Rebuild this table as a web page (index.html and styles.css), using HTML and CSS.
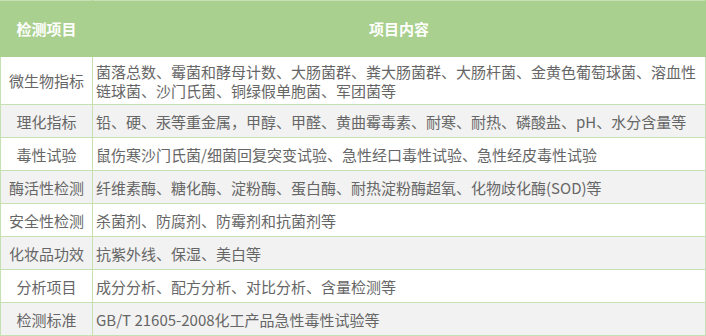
FILE: index.html
```html
<!DOCTYPE html>
<html lang="zh-CN">
<head>
<meta charset="utf-8">
<title>检测项目</title>
<link rel="stylesheet" href="styles.css">
</head>
<body>
<table class="spec">
  <colgroup><col class="c1"><col class="c2"></colgroup>
  <thead>
    <tr class="head"><th>检测项目</th><th>项目内容</th></tr>
  </thead>
  <tbody>
    <tr class="r-tall"><td class="name">微生物指标</td><td class="desc">菌落总数、霉菌和酵母计数、大肠菌群、粪大肠菌群、大肠杆菌、金黄色葡萄球菌、溶血性链球菌、沙门氏菌、铜绿假单胞菌、军团菌等</td></tr>
    <tr class="alt"><td class="name">理化指标</td><td class="desc">铅、硬、汞等重金属，甲醇、甲醛、黄曲霉毒素、耐寒、耐热、磷酸盐、pH、水分含量等</td></tr>
    <tr><td class="name">毒性试验</td><td class="desc">鼠伤寒沙门氏菌/细菌回复突变试验、急性经口毒性试验、急性经皮毒性试验</td></tr>
    <tr class="alt"><td class="name">酶活性检测</td><td class="desc">纤维素酶、糖化酶、淀粉酶、蛋白酶、耐热淀粉酶超氧、化物歧化酶(SOD)等</td></tr>
    <tr><td class="name">安全性检测</td><td class="desc">杀菌剂、防腐剂、防霉剂和抗菌剂等</td></tr>
    <tr class="alt"><td class="name">化妆品功效</td><td class="desc">抗紫外线、保湿、美白等</td></tr>
    <tr><td class="name">分析项目</td><td class="desc">成分分析、配方分析、对比分析、含量检测等</td></tr>
    <tr class="alt"><td class="name">检测标准</td><td class="desc">GB/T 21605-2008化工产品急性毒性试验等</td></tr>
  </tbody>
</table>
</body>
</html>
```
FILE: styles.css
```css
html, body {
  margin: 0;
  padding: 0;
  background: #ffffff;
}
.spec {
  width: 706px;
  border-collapse: collapse;
  table-layout: fixed;
  font-family: "Noto Sans CJK SC", "Noto Sans", sans-serif;
  font-size: 15px;
  color: #666666;
}
.c1 { width: 92px; }
.spec th, .spec td {
  border: 1px solid #c5e0b3;
  padding: 0 3px;
  line-height: 19px;
  vertical-align: middle;
}
.head th {
  background: #a9d08e;
  color: #ffffff;
  font-weight: bold;
  text-align: center;
  height: 55px;
  border-color: #a9d08e;
  border-top-color: #c5e0b3;
}
.spec td { height: 32px; }
.r-tall td { height: 47px; }
.name { text-align: center; white-space: nowrap; padding: 0; }
.desc { text-align: left; padding-left: 3px; }
.alt td { background: #f2f2f2; }
```
